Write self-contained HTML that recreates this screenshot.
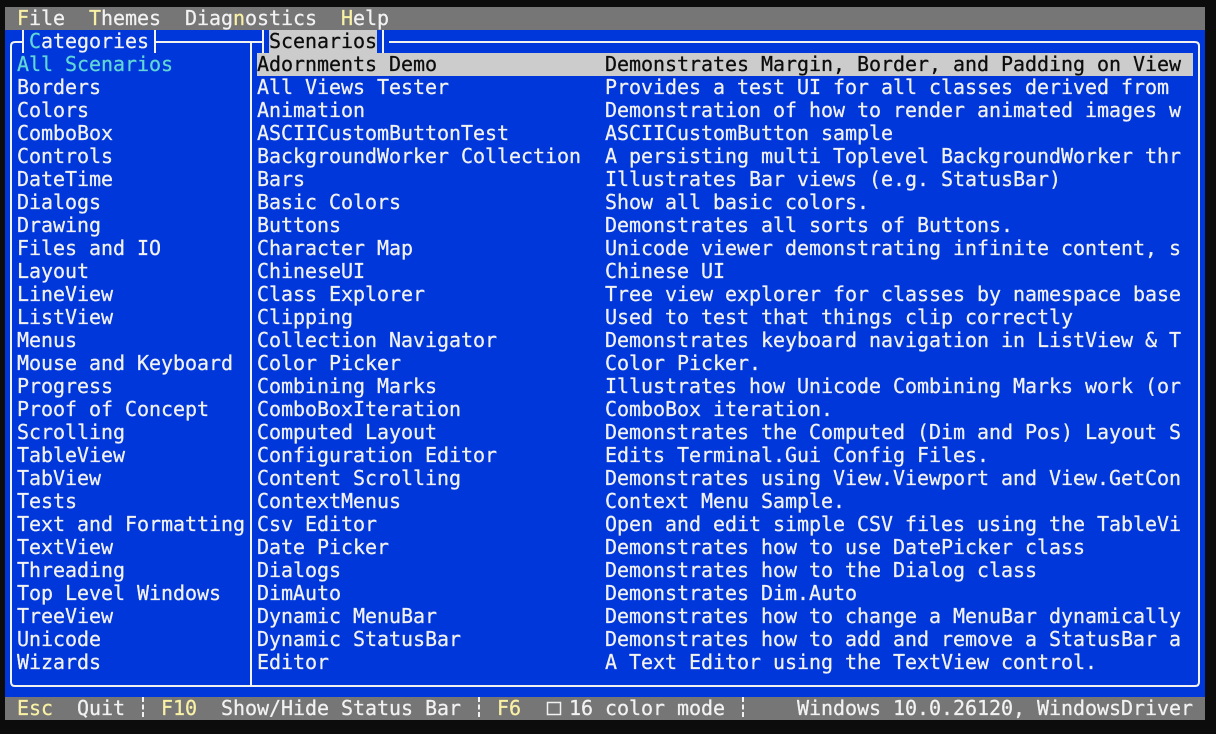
<!DOCTYPE html>
<html><head><meta charset="utf-8"><style>
html,body{margin:0;padding:0;background:#0c0c0c;width:1216px;height:734px;overflow:hidden}
#t{position:absolute;left:5px;top:7px;width:1200px;height:713px;background:#0037da;overflow:hidden;font:20px/23px "DejaVu Sans Mono","Liberation Mono",monospace;letter-spacing:-.04px;color:#f2f2f2;-webkit-text-stroke:.25px currentColor}
.b{position:absolute;left:0;width:1200px;height:23px;background:#767676}
.c{position:absolute;white-space:pre;height:23px;line-height:23px}
.y{color:#f9f1a5}.cy{color:#61d6d6}
.s{background:#ccc;color:#0c0c0c}
svg{position:absolute;left:0;top:0}
</style></head><body><div id="t">
<div class="b" style="top:0"></div><div class="b" style="top:690px"></div>
<div class="c" style="top:0;left:12px"><span class="y">F</span>ile</div>
<div class="c" style="top:0;left:84px"><span class="y">T</span>hemes</div>
<div class="c" style="top:0;left:180px">Diag<span class="y">n</span>ostics</div>
<div class="c" style="top:0;left:336px"><span class="y">H</span>elp</div>
<svg width="1200" height="713" fill="none" stroke="#f2f2f2" stroke-width="2">
<path d="M18 35H10Q6 35 6 39V675Q6 679 10 679H1190Q1194 679 1194 675V39Q1194 35 1190 35H384"/>
<path d="M18 23V46M150 23V46M258 23V46M378 23V46M150 35H258"/>
<path d="M246 35V679"/>
<path d="M138 690V710M474 690V710M738 690V710" stroke-dasharray="5 2.5"/>
<rect x="542.5" y="695.5" width="13" height="12" stroke="#f2f2f2" stroke-width="1.5"/>
</svg>
<div class="c cy" style="top:23px;left:24px">C<span style="color:#f2f2f2">ategories</span></div>
<div class="c s" style="top:23px;left:264px;width:108px">Scenarios</div>
<div class="c s" style="top:46px;left:252px;width:936px"></div>
<div class="c cy" style="top:46px;left:12px">All Scenarios</div>
<div class="c" style="top:69px;left:12px">Borders</div>
<div class="c" style="top:92px;left:12px">Colors</div>
<div class="c" style="top:115px;left:12px">ComboBox</div>
<div class="c" style="top:138px;left:12px">Controls</div>
<div class="c" style="top:161px;left:12px">DateTime</div>
<div class="c" style="top:184px;left:12px">Dialogs</div>
<div class="c" style="top:207px;left:12px">Drawing</div>
<div class="c" style="top:230px;left:12px">Files and IO</div>
<div class="c" style="top:253px;left:12px">Layout</div>
<div class="c" style="top:276px;left:12px">LineView</div>
<div class="c" style="top:299px;left:12px">ListView</div>
<div class="c" style="top:322px;left:12px">Menus</div>
<div class="c" style="top:345px;left:12px">Mouse and Keyboard</div>
<div class="c" style="top:368px;left:12px">Progress</div>
<div class="c" style="top:391px;left:12px">Proof of Concept</div>
<div class="c" style="top:414px;left:12px">Scrolling</div>
<div class="c" style="top:437px;left:12px">TableView</div>
<div class="c" style="top:460px;left:12px">TabView</div>
<div class="c" style="top:483px;left:12px">Tests</div>
<div class="c" style="top:506px;left:12px">Text and Formatting</div>
<div class="c" style="top:529px;left:12px">TextView</div>
<div class="c" style="top:552px;left:12px">Threading</div>
<div class="c" style="top:575px;left:12px">Top Level Windows</div>
<div class="c" style="top:598px;left:12px">TreeView</div>
<div class="c" style="top:621px;left:12px">Unicode</div>
<div class="c" style="top:644px;left:12px">Wizards</div>
<div class="c" style="top:46px;left:252px;color:#0c0c0c">Adornments Demo</div>
<div class="c" style="top:69px;left:252px">All Views Tester</div>
<div class="c" style="top:92px;left:252px">Animation</div>
<div class="c" style="top:115px;left:252px">ASCIICustomButtonTest</div>
<div class="c" style="top:138px;left:252px">BackgroundWorker Collection</div>
<div class="c" style="top:161px;left:252px">Bars</div>
<div class="c" style="top:184px;left:252px">Basic Colors</div>
<div class="c" style="top:207px;left:252px">Buttons</div>
<div class="c" style="top:230px;left:252px">Character Map</div>
<div class="c" style="top:253px;left:252px">ChineseUI</div>
<div class="c" style="top:276px;left:252px">Class Explorer</div>
<div class="c" style="top:299px;left:252px">Clipping</div>
<div class="c" style="top:322px;left:252px">Collection Navigator</div>
<div class="c" style="top:345px;left:252px">Color Picker</div>
<div class="c" style="top:368px;left:252px">Combining Marks</div>
<div class="c" style="top:391px;left:252px">ComboBoxIteration</div>
<div class="c" style="top:414px;left:252px">Computed Layout</div>
<div class="c" style="top:437px;left:252px">Configuration Editor</div>
<div class="c" style="top:460px;left:252px">Content Scrolling</div>
<div class="c" style="top:483px;left:252px">ContextMenus</div>
<div class="c" style="top:506px;left:252px">Csv Editor</div>
<div class="c" style="top:529px;left:252px">Date Picker</div>
<div class="c" style="top:552px;left:252px">Dialogs</div>
<div class="c" style="top:575px;left:252px">DimAuto</div>
<div class="c" style="top:598px;left:252px">Dynamic MenuBar</div>
<div class="c" style="top:621px;left:252px">Dynamic StatusBar</div>
<div class="c" style="top:644px;left:252px">Editor</div>
<div class="c" style="top:46px;left:600px;color:#0c0c0c">Demonstrates Margin, Border, and Padding on View</div>
<div class="c" style="top:69px;left:600px">Provides a test UI for all classes derived from</div>
<div class="c" style="top:92px;left:600px">Demonstration of how to render animated images w</div>
<div class="c" style="top:115px;left:600px">ASCIICustomButton sample</div>
<div class="c" style="top:138px;left:600px">A persisting multi Toplevel BackgroundWorker thr</div>
<div class="c" style="top:161px;left:600px">Illustrates Bar views (e.g. StatusBar)</div>
<div class="c" style="top:184px;left:600px">Show all basic colors.</div>
<div class="c" style="top:207px;left:600px">Demonstrates all sorts of Buttons.</div>
<div class="c" style="top:230px;left:600px">Unicode viewer demonstrating infinite content, s</div>
<div class="c" style="top:253px;left:600px">Chinese UI</div>
<div class="c" style="top:276px;left:600px">Tree view explorer for classes by namespace base</div>
<div class="c" style="top:299px;left:600px">Used to test that things clip correctly</div>
<div class="c" style="top:322px;left:600px">Demonstrates keyboard navigation in ListView &amp; T</div>
<div class="c" style="top:345px;left:600px">Color Picker.</div>
<div class="c" style="top:368px;left:600px">Illustrates how Unicode Combining Marks work (or</div>
<div class="c" style="top:391px;left:600px">ComboBox iteration.</div>
<div class="c" style="top:414px;left:600px">Demonstrates the Computed (Dim and Pos) Layout S</div>
<div class="c" style="top:437px;left:600px">Edits Terminal.Gui Config Files.</div>
<div class="c" style="top:460px;left:600px">Demonstrates using View.Viewport and View.GetCon</div>
<div class="c" style="top:483px;left:600px">Context Menu Sample.</div>
<div class="c" style="top:506px;left:600px">Open and edit simple CSV files using the TableVi</div>
<div class="c" style="top:529px;left:600px">Demonstrates how to use DatePicker class</div>
<div class="c" style="top:552px;left:600px">Demonstrates how to the Dialog class</div>
<div class="c" style="top:575px;left:600px">Demonstrates Dim.Auto</div>
<div class="c" style="top:598px;left:600px">Demonstrates how to change a MenuBar dynamically</div>
<div class="c" style="top:621px;left:600px">Demonstrates how to add and remove a StatusBar a</div>
<div class="c" style="top:644px;left:600px">A Text Editor using the TextView control.</div>
<div class="c y" style="top:690px;left:12px">Esc</div>
<div class="c" style="top:690px;left:72px">Quit</div>
<div class="c y" style="top:690px;left:156px">F10</div>
<div class="c" style="top:690px;left:216px">Show/Hide Status Bar</div>
<div class="c y" style="top:690px;left:492px">F6</div>
<div class="c" style="top:690px;left:564px">16 color mode</div>
<div class="c" style="top:690px;left:792px">Windows 10.0.26120, WindowsDriver</div>
</div></body></html>
